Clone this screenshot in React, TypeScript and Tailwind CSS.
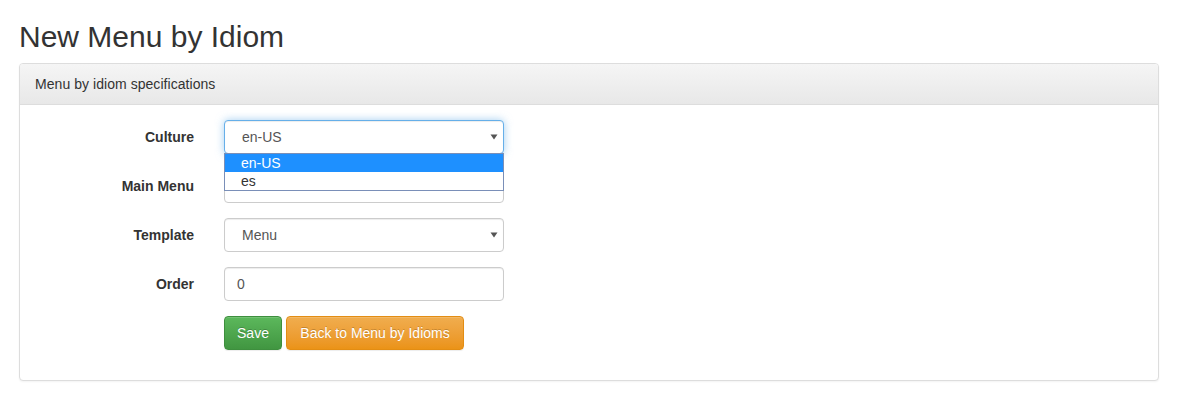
import React from "react";

const inputShape =
  "h-[34px] w-[280px] rounded-[4px] border bg-white text-[14px] text-[#555]";
const inputBase = `${inputShape} border-[#ccc] shadow-[inset_0_1px_1px_rgba(0,0,0,0.075)]`;

function Caret() {
  return (
    <svg width="8" height="6" viewBox="0 0 8 6" className="absolute right-[6px] top-[14px]">
      <path d="M0.5 0.5 L7.5 0.5 L4 5.5 Z" fill="#555" />
    </svg>
  );
}

function Label({ children }: { children: React.ReactNode }) {
  return (
    <label className="w-[159px] shrink-0 pt-[7px] text-right text-[14px] font-bold leading-[20px] text-[#333]">
      {children}
    </label>
  );
}

export default function App() {
  return (
    <div className="min-h-screen bg-white px-[19px] font-['Liberation_Sans',Arial,sans-serif] text-[#333]">
      <h2 className="pt-[20px] pb-[10px] text-[30px] font-normal leading-[33px] text-[#333]">New Menu by Idiom</h2>

      <div className="w-[1140px] rounded-[4px] border border-[#ddd] bg-white shadow-[0_1px_2px_rgba(0,0,0,0.05)]">
        <div className="rounded-t-[3px] border-b border-[#ddd] bg-gradient-to-b from-[#f5f5f5] to-[#e8e8e8] px-[15px] py-[10px] text-[14px] leading-[20px] tracking-[0.05px] text-[#333]">
          Menu by idiom specifications
        </div>

        <div className="p-[15px]">
          {/* Culture */}
          <div className="mb-[15px] flex gap-[30px]">
            <Label>Culture</Label>
            <div className="relative">
              <div
                className={`${inputShape} flex items-center border-[#66afe9] pl-[17px] shadow-[inset_0_1px_1px_rgba(0,0,0,0.075),0_0_8px_rgba(102,175,233,0.6)]`}
              >
                en-US
              </div>
              <Caret />
              {/* open native dropdown */}
              <div className="absolute left-0 top-[33px] z-10 w-[280px] border border-[#7a8fb8] bg-white text-[14px] leading-[18px]">
                <div className="bg-[#1e90ff] pl-[16px] text-white">en-US</div>
                <div className="pl-[16px] text-[#333]">es</div>
              </div>
            </div>
          </div>

          {/* Main Menu */}
          <div className="mb-[15px] flex gap-[30px]">
            <Label>Main Menu</Label>
            <div className={inputBase} />
          </div>

          {/* Template */}
          <div className="mb-[15px] flex gap-[30px]">
            <Label>Template</Label>
            <div className="relative">
              <div className={`${inputBase} flex items-center pl-[17px]`}>Menu</div>
              <Caret />
            </div>
          </div>

          {/* Order */}
          <div className="mb-[15px] flex gap-[30px]">
            <Label>Order</Label>
            <div className={`${inputBase} flex items-center pl-[12px]`}>0</div>
          </div>

          <div className="mb-[15px] flex gap-[30px]">
            <div className="w-[159px] shrink-0" />
            <div className="flex gap-[4px]">
              <button className="h-[34px] w-[58px] rounded-[4px] border border-[#3e8f3e] bg-gradient-to-b from-[#5cb85c] to-[#419641] text-[14px] text-white shadow-[inset_0_1px_0_rgba(255,255,255,0.15),0_1px_1px_rgba(0,0,0,0.075)] [text-shadow:0_-1px_0_rgba(0,0,0,0.2)]">
                Save
              </button>
              <button className="h-[34px] w-[178px] rounded-[4px] border border-[#e38d13] bg-gradient-to-b from-[#f0ad4e] to-[#eb9316] text-[14px] text-white shadow-[inset_0_1px_0_rgba(255,255,255,0.15),0_1px_1px_rgba(0,0,0,0.075)] [text-shadow:0_-1px_0_rgba(0,0,0,0.2)]">
                Back to Menu by Idioms
              </button>
            </div>
          </div>
        </div>
      </div>
    </div>
  );
}
